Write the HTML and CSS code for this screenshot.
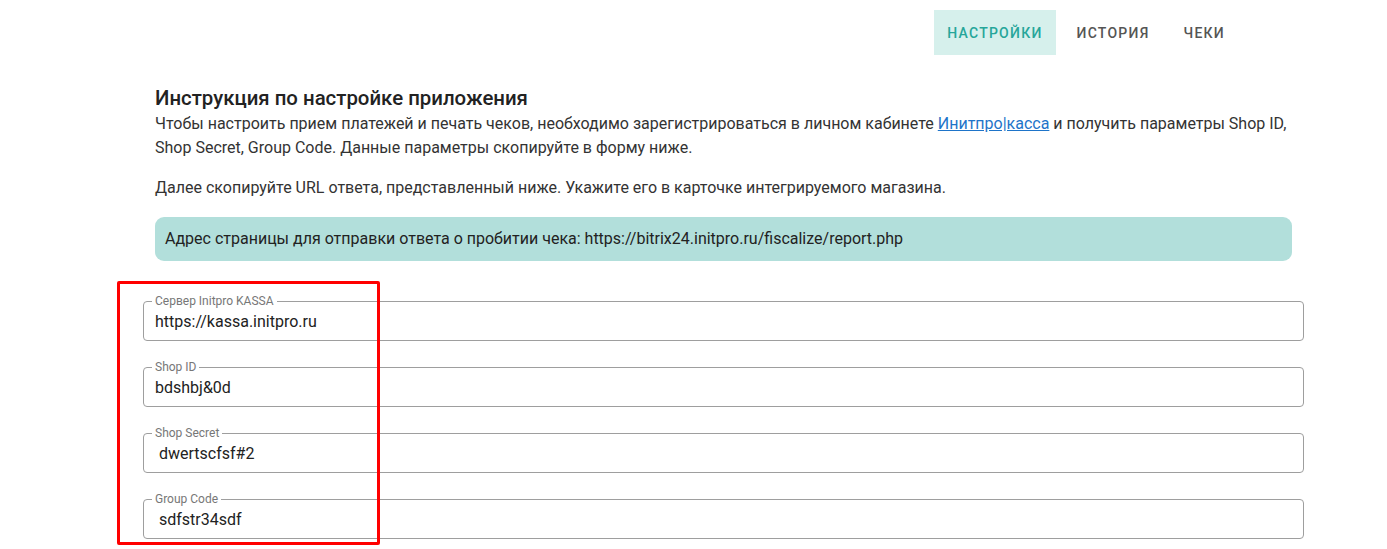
FILE: index.html
```html
<!DOCTYPE html>
<html lang="ru">
<head>
<meta charset="utf-8">
<title>Настройки</title>
<link rel="stylesheet" href="styles.css">
</head>
<body>
<nav class="tabs">
  <a class="tab tab-active">Настройки</a>
  <a class="tab">История</a>
  <a class="tab">Чеки</a>
</nav>
<main class="page">
  <section class="info">
    <h2 class="title">Инструкция по настройке приложения</h2>
    <p class="text">Чтобы настроить прием платежей и печать чеков, необходимо зарегистрироваться в личном кабинете <a class="link" href="#">Инитпро|касса</a> и получить параметры Shop ID, Shop Secret, Group Code. Данные параметры скопируйте в форму ниже.</p>
    <p class="text text-gap">Далее скопируйте URL ответа, представленный ниже. Укажите его в карточке интегрируемого магазина.</p>
    <div class="notice">Адрес страницы для отправки ответа о пробитии чека: https://bitrix24.initpro.ru/fiscalize/report.php</div>
  </section>
  <form class="form">
    <div class="field">
      <label class="field-label">Сервер Initpro KASSA</label>
      <input class="field-input" type="text" value="https://kassa.initpro.ru">
    </div>
    <div class="field">
      <label class="field-label">Shop ID</label>
      <input class="field-input" type="text" value="bdshbj&amp;0d">
    </div>
    <div class="field">
      <label class="field-label">Shop Secret</label>
      <input class="field-input" type="text" value=" dwertscfsf#2">
    </div>
    <div class="field">
      <label class="field-label">Group Code</label>
      <input class="field-input" type="text" value=" sdfstr34sdf">
    </div>
  </form>
  <div class="highlight"></div>
</main>
</body>
</html>
```
FILE: styles.css
```css
* { box-sizing: border-box; }
html, body { margin: 0; padding: 0; background: #fff; }
body {
  font-family: Roboto, "Liberation Sans", sans-serif;
  color: #222;
  width: 1387px;
  height: 549px;
  overflow: hidden;
}
.tabs {
  display: flex;
  justify-content: flex-end;
  gap: 8px;
  padding: 10px 149px 0 0;
}
.tab {
  display: flex;
  align-items: center;
  height: 45px;
  padding: 1px 13px 0;
  font-size: 14px;
  font-weight: 500;
  letter-spacing: 1.25px;
  text-transform: uppercase;
  color: #555;
}
.tab-active {
  color: #26a69a;
  background: #d6f0ec;
}
.page {
  position: relative;
  width: 1161px;
  margin-left: 143px;
}
.info {
  padding: 29px 12px 0;
}
.title {
  margin: 0;
  font-size: 20.4px;
  font-weight: 500;
  line-height: 28px;
  color: #222;
}
.text {
  margin: 0;
  font-size: 16px;
  line-height: 24px;
  color: #333;
}
.text-gap { margin-top: 16px; }
.link { color: #1e74c9; text-decoration: underline; }
.notice {
  margin-top: 17px;
  padding: 10px 10px;
  font-size: 16px;
  line-height: 24px;
  background: #b2dfdb;
  border-radius: 9px;
  color: #222;
}
.form {
  display: flex;
  flex-direction: column;
  gap: 26px;
  margin-top: 40px;
}
.field {
  position: relative;
  height: 40px;
  border: 1px solid #9e9e9e;
  border-radius: 4px;
}
.field-label {
  position: absolute;
  top: -8px;
  left: 8px;
  padding: 0 3px;
  background: #fff;
  font-size: 12px;
  line-height: 14px;
  color: #777;
}
.field-input {
  display: block;
  width: 100%;
  height: 100%;
  border: 0;
  outline: 0;
  background: transparent;
  padding: 0 11px;
  font-family: Roboto, "Liberation Sans", sans-serif;
  font-size: 16px;
  color: #222;
}
.highlight {
  position: absolute;
  left: -26px;
  top: 226px;
  width: 263px;
  height: 264px;
  border: 3px solid #f00;
  border-radius: 2px;
}
```
